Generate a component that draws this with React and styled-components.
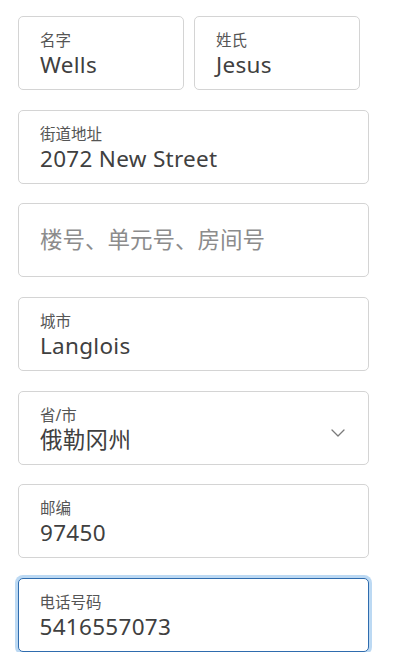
import styled, { createGlobalStyle, css } from 'styled-components'

const GlobalStyle = createGlobalStyle`
  body {
    margin: 0;
    background: #ffffff;
    font-family: "Noto Sans", "Noto Sans CJK SC", sans-serif;
  }
`

const fields = [
    { label: '街道地址', value: '2072 New Street' },
    { placeholder: '楼号、单元号、房间号' },
    { label: '城市', value: 'Langlois' },
    { label: '省/市', value: '俄勒冈州', select: true },
    { label: '邮编', value: '97450' },
    { label: '电话号码', value: '5416557073', focused: true },
]

const Chevron = () => (
    <svg width="14" height="8" viewBox="0 0 14 8" fill="none">
        <path d="M1 1l6 6 6-6" stroke="#7a7a7a" strokeWidth="1.3" strokeLinecap="round" strokeLinejoin="round" />
    </svg>
)

const Field = ({ label, value, placeholder, select, focused }) => (
    <Box $focused={focused} $empty={!!placeholder}>
        <Text>
            {placeholder ? (
                <Placeholder>{placeholder}</Placeholder>
            ) : (
                <>
                    <Label>{label}</Label>
                    <Value>{value}</Value>
                </>
            )}
        </Text>
        {select && <Chevron />}
    </Box>
)

const App = () => {
    return (
        <Page>
            <GlobalStyle />
            <NameRow>
                <Field label="名字" value="Wells" />
                <Field label="姓氏" value="Jesus" />
            </NameRow>
            {fields.map((f, i) => (
                <Field key={i} {...f} />
            ))}
        </Page>
    )
}

export default App

const Page = styled.div`
    display: flex;
    flex-direction: column;
    gap: 19.7px;
    width: 351px;
    padding: 16px 0 0 18px;
`

const NameRow = styled.div`
    display: grid;
    grid-template-columns: 166px 166px;
    gap: 10px;
`

const Box = styled.div`
    box-sizing: border-box;
    height: 74px;
    display: flex;
    align-items: ${p => (p.$empty ? 'center' : 'flex-start')};
    justify-content: space-between;
    padding: ${p => (p.$empty ? '0 21px' : '13px 23px 0 21px')};
    border: 1px solid #d4d4d4;
    border-radius: 5px;
    background: #fff;

    svg {
        align-self: center;
        margin-top: -2px;
    }

    ${p => p.$focused && css`
        border: 1.5px solid #2f6cae;
        box-shadow: 0 0 0 3px #bcd9f3;
        padding-left: 20.5px;
    `}
`

const Text = styled.div`
    display: flex;
    flex-direction: column;
`

const Label = styled.span`
    font-size: 15.5px;
    line-height: 21px;
    color: #555;
`

const Value = styled.span`
    font-size: 22.5px;
    line-height: 28px;
    letter-spacing: 0.3px;
    color: #404040;
`

const Placeholder = styled.span`
    font-size: 22.5px;
    line-height: 28px;
    color: #8c8c8c;
`
